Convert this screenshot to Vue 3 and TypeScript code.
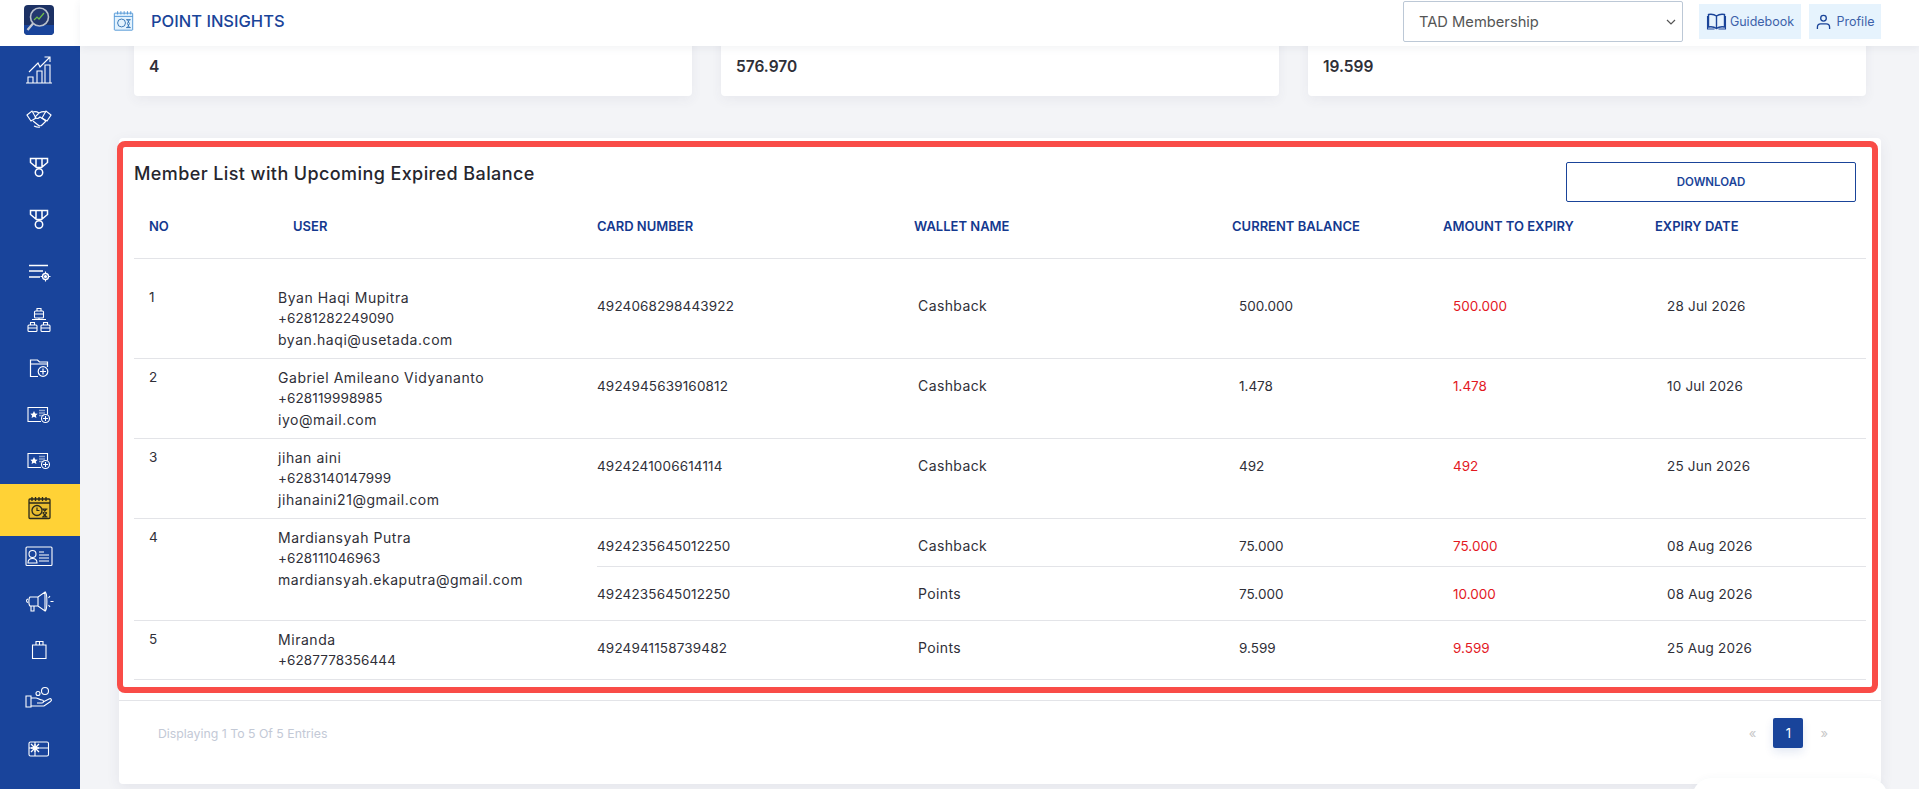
<template>
  <div class="layout">
    <aside class="sidebar">
      <div class="logo-box">
        <svg width="30" height="30" viewBox="0 0 30 30">
          <rect width="30" height="30" rx="4" fill="#1c3164" />
          <path d="M0 20h30v6a4 4 0 0 1-4 4H4a4 4 0 0 1-4-4z" fill="#19449b" />
          <circle cx="15.500" cy="12" r="9" fill="#23386e" stroke="#b9c0cc" stroke-width="1.600" />
          <path d="M10 15l3-3 2 2 5-6" fill="none" stroke="#6fbf4a" stroke-width="1.200" />
          <path d="M9 18.500L3.500 25" stroke="#c5cad4" stroke-width="2.200" />
        </svg>
      </div>
      <nav class="menu">
        <div v-for="item in menu" :key="item.key" class="menu-item" :class="{ active: item.id === 'insights' }" :style="{ height: item.h + 'px' }">
          <svg width="32" height="32" viewBox="0 0 32 32" fill="none" stroke="currentColor" stroke-width="1.100">
            <template v-if="item.id === 'chart'">
              <path d="M3 29h26M5 28.500V23h5v5.500M14 28.500V17h5v11.500M22 28.500V11h5v17.500" />
              <path d="M6 18l9-9 2 4 10-10M21.500 3H27v5" />
            </template>
            <template v-else-if="item.id === 'hands'">
              <path d="M4 13l5-4 4 7-5 3zM28 13l-5-4-4 7 5 3z" />
              <path d="M10 10c3-1 4.500 0 6 1 2-1 4-2 7-1M16 11l-4 4c1 2 3 2 5 0l6 4" />
              <path d="M10 19l5 4c1 1 3 1 4 0l4-4M11 24c2 1 4 1.500 6 1" />
            </template>
            <template v-else-if="item.id === 'medal'">
              <path d="M7.500 7.500h17v4l-6 5h-5l-6-5zM13 7.500v8M19 7.500v8" stroke-width="1.500" />
              <circle cx="16" cy="21.500" r="3.700" stroke-width="1.500" />
            </template>
            <template v-else-if="item.id === 'list'">
              <path d="M6 8.500h19M6 14h14M6 20h11" stroke-width="1.400" />
              <circle cx="22.500" cy="19.500" r="3" stroke-width="1.400" />
              <circle cx="22.500" cy="19.500" r="1" fill="currentColor" />
              <path d="M22.500 14.500v2M22.500 22.500v2M17.500 19.500h2M25.500 19.500h2" />
            </template>
            <template v-else-if="item.id === 'org'">
              <rect x="11.500" y="7" width="9" height="7" rx="1" />
              <rect x="5" y="21" width="9" height="6.500" rx="1" />
              <rect x="18" y="21" width="9" height="6.500" rx="1" />
              <path d="M14 7V4.500h4V7M7.500 21v-2.500h4V21M20.500 21v-2.500h4V21M16 14v1.500M9 15.500h14M5 24h9M11.500 10h9M18 24h9" />
            </template>
            <template v-else-if="item.id === 'folder'">
              <path d="M15 24.500H7.500V8h7l2 2h8v5" stroke-width="1.200" />
              <path d="M8 12h16" />
              <circle cx="20" cy="19.500" r="4.800" stroke-width="1.200" />
              <path d="M20 16.500v6M17 19.500h6" stroke-width="1.200" />
            </template>
            <template v-else-if="item.id === 'card'">
              <path d="M18 22.500H5V8.500h19.500v7" stroke-width="1.100" />
              <path d="M11 12l1.200 2.400 2.500.3-1.800 1.800.5 2.500-2.400-1.200-2.400 1.200.5-2.500-1.800-1.800 2.500-.3z" fill="currentColor" stroke="none" />
              <path d="M16 11.500h6M16 14h6M16 16.500h5" stroke-width="1.400" opacity=".5" />
              <circle cx="22.500" cy="19.500" r="4" stroke-width="1.100" />
              <path d="M22.500 17v5M20 19.500h5" stroke-width="1.100" />
            </template>
            <template v-else-if="item.id === 'insights'">
              <rect x="6" y="7" width="21" height="19.500" rx="1" fill="#e8bd2f" stroke-width="1.300" />
              <path d="M9 5v4M12.500 5v4M16 5v4M19.500 5v4M23 5v4M6 11h21" stroke-width="1.300" />
              <circle cx="14" cy="18.500" r="5" stroke-width="1.300" />
              <path d="M14 15.500v3h2.500M19 17h5.500M19 25h5.500M20 17l3.500 4-3.500 4M23.500 17L20 21l3.500 4" stroke-width="1.200" />
            </template>
            <template v-else-if="item.id === 'idcard'">
              <rect x="3" y="7" width="26" height="18.500" rx="1" />
              <circle cx="9.500" cy="14" r="3.500" />
              <path d="M5 23c0-3 1.500-4.500 4.500-4.500s4.500 1.500 4.500 4.500zM16 12h5M16 15h10M16 18h10M16 21h10" />
            </template>
            <template v-else-if="item.id === 'mega'">
              <path d="M7 12h8l7-5v19l-7-5H7c-1.500-1-1.500-8 0-9zM15 12v9M8 21v5h3v-5M5 14c-2 .5-2 3 0 3.500M22 7c2.500 0 2.500 19 0 19" stroke-width="1.100" />
              <path d="M27 11l-1.500 2M27.500 16.500h3M27 22l-1.500-2" stroke-width="1.100" />
            </template>
            <template v-else-if="item.id === 'bag'">
              <path d="M9.500 11H23v13.500H9.500zM13 11V7.500h7V11M16.500 7.500V11" stroke-width="1.100" />
            </template>
            <template v-else-if="item.id === 'hand'">
              <path d="M3 15h5v11H3zM8 17h5c2 0 3 2 6 2 2 0 2 3 0 3h-5M20 21l6-3c2-1 3.500 1 1.500 2.500L21 25H8" stroke-width="1.100" />
              <circle cx="22" cy="10" r="3.500" />
              <circle cx="15" cy="12.500" r="2" />
            </template>
            <template v-else>
              <rect x="6" y="9" width="19.500" height="14" rx="1.500" stroke-width="1.100" />
              <path d="M6 15h19.500M12 9v14" stroke-width="1.100" />
              <path d="M8 11l8 8M16 11l-8 8M12 11v8M8 15h8" stroke-width="1.300" />
            </template>
          </svg>
        </div>
      </nav>
    </aside>

    <div class="body">
      <header class="topbar">
        <div class="page-title">
          <svg width="21" height="22" viewBox="0 0 32 32" fill="#e3f2fd" stroke="#4f94d4" stroke-width="1.400">
            <rect x="2" y="4" width="28" height="26" rx="1" />
            <path d="M7 1v5M12 1v5M17 1v5M22 1v5M27 1v5M2 9h28" fill="none" />
            <circle cx="13" cy="19" r="6" fill="none" stroke="#2f6fb0" />
            <path d="M20 14h7M20 26h7M22 14l3 6-3 6M25 14l-3 6 3 6" fill="none" stroke="#2f6fb0" />
          </svg>
          <span>POINT INSIGHTS</span>
        </div>
        <div class="top-actions">
          <div class="select-wrap">
            <select class="program-select">
              <option>TAD Membership</option>
            </select>
            <svg class="chevron" width="10" height="6" viewBox="0 0 10 6" fill="none" stroke="#555" stroke-width="1.200">
              <path d="M1 1l4 4 4-4" />
            </svg>
          </div>
          <button class="soft-btn guide" type="button">
            <svg width="21" height="17" viewBox="0 0 20 17" fill="none" stroke="#1a4499" stroke-width="1.400">
              <path d="M10 3C8 1.500 5 1 2 1.500V14c3-.5 6 0 8 1.500 2-1.500 5-2 8-1.500V1.500C15 1 12 1.500 10 3zM10 3v12.500" />
              <path d="M1 3v13h7M19 3v13h-7" stroke-width="1.100" />
            </svg>
            Guidebook
          </button>
          <button class="soft-btn profile" type="button">
            <svg width="15" height="16" viewBox="0 0 16 17" fill="none" stroke="#1a4499" stroke-width="1.400">
              <circle cx="8" cy="4.500" r="3" />
              <path d="M1.500 16v-2c0-2 1.500-3.500 3.500-3.500h6c2 0 3.500 1.500 3.500 3.500v2" />
            </svg>
            Profile
          </button>
        </div>
      </header>

      <main class="content">
        <section class="stats">
          <div v-for="s in stats" :key="s" class="stat-card">{{ s }}</div>
        </section>

        <section class="panel">
          <div class="panel-head">
            <h2>Member List with Upcoming Expired Balance</h2>
            <button class="download" type="button">DOWNLOAD</button>
          </div>

          <div class="table-head grid-row">
            <span class="c-no">NO</span>
            <span class="c-user-h">USER</span>
            <span>CARD NUMBER</span>
            <span>WALLET NAME</span>
            <span>CURRENT BALANCE</span>
            <span>AMOUNT TO EXPIRY</span>
            <span>EXPIRY DATE</span>
          </div>

          <div v-for="m in members" :key="m.no" class="member grid-row" :class="m.cls">
            <div class="c-no">{{ m.no }}</div>
            <div class="user">
              <div v-for="(line, i) in m.user" :key="line" :class="{ phone: i === 1 }">{{ line }}</div>
            </div>
            <div class="wallets">
              <div v-for="w in m.wallets" :key="w.wallet + w.amount" class="wallet-row">
                <span class="c-card">{{ w.card }}</span>
                <span class="c-wallet">{{ w.wallet }}</span>
                <span class="c-balance">{{ w.balance }}</span>
                <span class="c-amount">{{ w.amount }}</span>
                <span class="c-date">{{ w.date }}</span>
              </div>
            </div>
          </div>

          <div class="panel-foot">
            <span class="entries">Displaying 1 To 5 Of 5 Entries</span>
            <div class="pager">
              <span class="arrow">«</span>
              <span class="page">1</span>
              <span class="arrow">»</span>
            </div>
          </div>
        </section>
      </main>

      <div class="highlight"></div>
      <div class="corner-widget"></div>
    </div>
  </div>
</template>

<script setup lang="ts">
interface Wallet {
  card: string
  wallet: string
  balance: string
  amount: string
  date: string
}

interface Member {
  no: number
  cls: string
  user: string[]
  wallets: Wallet[]
}

const menu = [
  { key: 'chart', id: 'chart', h: 40 },
  { key: 'hands', id: 'hands', h: 56 },
  { key: 'medal1', id: 'medal', h: 42 },
  { key: 'medal2', id: 'medal', h: 62 },
  { key: 'list', id: 'list', h: 46 },
  { key: 'org', id: 'org', h: 47 },
  { key: 'folder', id: 'folder', h: 49 },
  { key: 'card1', id: 'card', h: 45 },
  { key: 'card2', id: 'card', h: 47 },
  { key: 'insights', id: 'insights', h: 52 },
  { key: 'idcard', id: 'idcard', h: 40 },
  { key: 'mega', id: 'mega', h: 50 },
  { key: 'bag', id: 'bag', h: 47 },
  { key: 'hand', id: 'hand', h: 48 },
  { key: 'gift', id: 'gift', h: 56 },
]

const stats = ['4', '576.970', '19.599']

const members: Member[] = [
  {
    no: 1,
    cls: 'first',
    user: ['Byan Haqi Mupitra', '+6281282249090', 'byan.haqi@usetada.com'],
    wallets: [{ card: '4924068298443922', wallet: 'Cashback', balance: '500.000', amount: '500.000', date: '28 Jul 2026' }],
  },
  {
    no: 2,
    cls: '',
    user: ['Gabriel Amileano Vidyananto', '+628119998985', 'iyo@mail.com'],
    wallets: [{ card: '4924945639160812', wallet: 'Cashback', balance: '1.478', amount: '1.478', date: '10 Jul 2026' }],
  },
  {
    no: 3,
    cls: '',
    user: ['jihan aini', '+6283140147999', 'jihanaini21@gmail.com'],
    wallets: [{ card: '4924241006614114', wallet: 'Cashback', balance: '492', amount: '492', date: '25 Jun 2026' }],
  },
  {
    no: 4,
    cls: 'double',
    user: ['Mardiansyah Putra', '+628111046963', 'mardiansyah.ekaputra@gmail.com'],
    wallets: [
      { card: '4924235645012250', wallet: 'Cashback', balance: '75.000', amount: '75.000', date: '08 Aug 2026' },
      { card: '4924235645012250', wallet: 'Points', balance: '75.000', amount: '10.000', date: '08 Aug 2026' },
    ],
  },
  {
    no: 5,
    cls: 'last',
    user: ['Miranda', '+6287778356444'],
    wallets: [{ card: '4924941158739482', wallet: 'Points', balance: '9.599', amount: '9.599', date: '25 Aug 2026' }],
  },
]
</script>

<style>
html,
body {
  margin: 0;
  height: 100%;
  overflow: hidden;
  background: #f3f4f7;
}
</style>

<style scoped>
.layout {
  display: flex;
  height: 789px;
  font-family: Inter, 'Open Sans', sans-serif;
  color: #2f2f38;
  overflow: hidden;
}

.sidebar {
  width: 80px;
  flex: none;
  background: #19449b;
  display: flex;
  flex-direction: column;
}

.logo-box {
  height: 46px;
  box-sizing: border-box;
  padding: 5px 2px 0 0;
  background: #fff;
  display: flex;
  align-items: flex-start;
  justify-content: center;
}

.menu {
  padding-top: 4px;
}

.menu-item {
  display: flex;
  align-items: center;
  justify-content: center;
  padding-right: 2px;
  color: #fff;
}

.menu-item.active {
  box-sizing: border-box;
  padding-bottom: 5px;
  background: #ffd236;
  color: #2a2a1c;
}

.body {
  flex: 1;
  min-width: 0;
  position: relative;
}

.topbar {
  height: 46px;
  box-sizing: border-box;
  padding: 0 38px 3px 33px;
  background: #fff;
  box-shadow: 0 2px 8px rgba(60, 70, 100, 0.07);
  display: flex;
  align-items: center;
  justify-content: space-between;
  position: relative;
  z-index: 2;
}

.page-title {
  display: flex;
  align-items: center;
  gap: 17px;
  margin-bottom: 1px;
  color: #1a4499;
  font-size: 16.500px;
  font-weight: 500;
}

.top-actions {
  display: flex;
  align-items: center;
}

.select-wrap {
  position: relative;
  margin-right: 16px;
}

.program-select {
  display: block;
  width: 280px;
  height: 41px;
  padding: 0 10px 0 15px;
  appearance: none;
  background: #fff;
  border: 1px solid #bcc8d6;
  border-radius: 2px;
  font: 14.700px Inter, sans-serif;
  color: #555;
}

.chevron {
  position: absolute;
  right: 7px;
  top: 18px;
}

.soft-btn {
  height: 35px;
  border: none;
  background: #e6f3fd;
  color: #3d62aa;
  font: 12.500px Inter, sans-serif;
  display: flex;
  align-items: center;
  justify-content: center;
  padding: 0;
}

.soft-btn.guide {
  width: 102px;
  margin-right: 8px;
  gap: 3px;
}

.soft-btn.profile {
  width: 72px;
  gap: 6px;
}

.content {
  padding: 0 38px 0 39px;
  margin-top: -22px;
}

.stats {
  display: grid;
  grid-template-columns: repeat(3, 558px);
  gap: 29px;
  padding-left: 15px;
}

.stat-card {
  height: 72px;
  box-sizing: border-box;
  padding: 33px 15px 0;
  background: #fff;
  border-radius: 4px;
  box-shadow: 0 4px 12px rgba(60, 70, 100, 0.06);
  font-size: 15.500px;
  font-weight: 600;
  line-height: 20px;
}

.panel {
  margin-top: 42px;
  height: 646px;
  box-sizing: border-box;
  padding: 0 15px;
  background: #fff;
  border-radius: 4px;
  box-shadow: 0 4px 14px rgba(60, 70, 100, 0.08);
  font-size: 13.500px;
  line-height: 21px;
}

.panel-head {
  height: 78px;
  display: flex;
  justify-content: space-between;
  align-items: flex-start;
}

.panel-head h2 {
  margin: 23px 0 0;
  font-size: 18px;
  line-height: 26px;
  letter-spacing: 0.4px;
  font-weight: 500;
  color: #26262e;
}

.download {
  width: 290px;
  height: 40px;
  margin: 24px 10px 0 0;
  background: #fff;
  border: 1px solid #1a4499;
  border-radius: 2px;
  color: #1a4499;
  font: 600 11.500px Inter, sans-serif;
}

.grid-row {
  display: grid;
  grid-template-columns: 144px 319px 1fr;
}

.table-head {
  grid-template-columns: 144px 319px 317px 318px 211px 212px 211px;
  height: 42px;
  border-bottom: 1px solid #e3e4e8;
  box-sizing: content-box;
  color: #14398f;
  font-size: 13px;
  font-weight: 600;
}

.c-no {
  padding-left: 15px;
}

.c-user-h {
  padding-left: 15px;
}

.member {
  border-bottom: 1px solid #e3e4e8;
  box-sizing: border-box;
  min-height: 80px;
  padding-top: 8px;
}

.member.first {
  min-height: 100px;
  padding-top: 28px;
}

.member.double {
  height: 102px;
}

.member.last {
  height: 59px;
  min-height: 59px;
}

.user {
  white-space: nowrap;
  font-size: 14px;
  letter-spacing: 0.55px;
}

.user .phone {
  font-size: 13.500px;
  letter-spacing: 0.1px;
}

.wallet-row {
  display: grid;
  grid-template-columns: 317px 318px 211px 212px 211px;
  align-items: baseline;
  line-height: 21px;
  padding-top: 8px;
}

.double .wallets {
  margin-top: -8px;
}

.double .wallet-row {
  height: 54px;
  box-sizing: border-box;
  padding-top: 16px;
}

.double .wallet-row:first-child {
  height: 48px;
  border-bottom: 1px solid #e3e4e8;
}

.c-card {
  letter-spacing: 0.15px;
}

.c-wallet {
  padding-left: 4px;
  font-size: 14px;
  letter-spacing: 0.4px;
}

.c-balance {
  padding-left: 7px;
}

.c-amount {
  padding-left: 10px;
  color: #e3191f;
}

.c-date {
  padding-left: 12px;
  letter-spacing: 0.2px;
}

.panel-foot {
  margin: 20px -15px 0;
  border-top: 1px solid #e3e4e8;
  display: flex;
  justify-content: space-between;
  align-items: center;
  height: 64px;
  padding: 0 33px 0 39px;
}

.entries {
  font-size: 12.300px;
  color: #c3c9d6;
}

.pager {
  display: flex;
  align-items: center;
  gap: 17px;
  margin-right: 20px;
}

.arrow {
  color: #c8c8c8;
  font-size: 13px;
}

.page {
  width: 30px;
  height: 30px;
  border-radius: 2px;
  background: #19449b;
  color: #fff;
  font-size: 13px;
  display: flex;
  align-items: center;
  justify-content: center;
  box-shadow: 0 4px 10px rgba(25, 68, 155, 0.12);
}

.highlight {
  position: absolute;
  left: 37px;
  top: 141px;
  width: 1761px;
  height: 552px;
  box-sizing: border-box;
  border: 6px solid #f94c47;
  border-radius: 8px;
  pointer-events: none;
}

.corner-widget {
  position: absolute;
  left: 1612px;
  top: 778px;
  width: 196px;
  height: 40px;
  background: #fff;
  border-radius: 20px;
  box-shadow: 0 0 8px rgba(60, 70, 100, 0.04);
}
</style>
